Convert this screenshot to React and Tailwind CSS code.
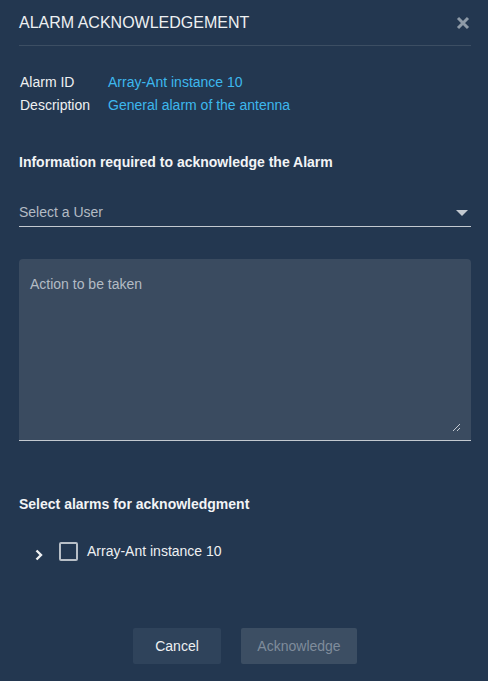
import React, { useState } from 'react';

export default function App() {
  const [checked, setChecked] = useState(false);

  return (
    <div className="min-h-[681px] w-[488px] bg-[#233750] text-[#e8ebee] font-['Liberation_Sans',Arial,sans-serif] pl-[19px] pr-[17px]">
      <div className="flex items-center justify-between h-[46px] border-b border-[#3c4e63] pt-px">
        <h1 className="text-[16px] text-[#eef0f2]">ALARM ACKNOWLEDGEMENT</h1>
        <button className="mr-px text-[#8e9aa7]" aria-label="Close">
          <svg width="14" height="14" viewBox="0 0 14 14">
            <path d="M2 2 L12 12 M12 2 L2 12" stroke="currentColor" strokeWidth="3" />
          </svg>
        </button>
      </div>

      <div className="mt-[25px] text-[14px] leading-[23px] pl-px">
        <div className="flex">
          <span className="w-[88px] text-[#eef0f2]">Alarm ID</span>
          <span className="text-[#3db7ee]">Array-Ant instance 10</span>
        </div>
        <div className="flex">
          <span className="w-[88px] text-[#eef0f2]">Description</span>
          <span className="text-[#3db7ee]">General alarm of the antenna</span>
        </div>
      </div>

      <h2 className="mt-[35px] text-[14px] font-bold text-[#f2f4f6]">
        Information required to acknowledge the Alarm
      </h2>

      <div className="mt-[24px] flex items-center justify-between h-[30px] border-b border-[#c3c9d0] pt-[2px]">
        <span className="text-[14px] text-[#b3bbc4]">Select a User</span>
        <svg width="12" height="6" viewBox="0 0 12 6" className="mr-[3px] text-[#c3c9d0]">
          <path d="M0 0 L12 0 L6 6 Z" fill="currentColor" />
        </svg>
      </div>

      <div className="relative mt-[32px] h-[182px] bg-[#3a4b60] rounded-t-[4px] border-b border-[#c3c9d0]">
        <div className="px-[11px] pt-[15px] text-[14px] text-[#b3bbc4]">Action to be taken</div>
        <svg width="9" height="9" viewBox="0 0 9 9" className="absolute right-[10px] bottom-[8px] text-[#c3c9d0]">
          <path d="M8 1 L1 8 M8 5 L5 8" stroke="currentColor" strokeWidth="1" />
        </svg>
      </div>

      <h2 className="mt-[53px] text-[14px] font-bold text-[#f2f4f6]">
        Select alarms for acknowledgment
      </h2>

      <div className="mt-[25px] flex items-center pl-[15px]">
        <svg width="10" height="14" viewBox="0 0 10 14" className="mt-[8px] text-[#eef0f2]">
          <path d="M2.5 2.5 L7 7 L2.5 11.5" stroke="currentColor" strokeWidth="2.4" fill="none" />
        </svg>
        <button
          onClick={() => setChecked(!checked)}
          className="ml-[15px] w-[19px] h-[19px] border-2 border-[#b8bfc7] rounded-[2px]"
          aria-label="Select alarm"
        />
        <span className="ml-[9px] text-[14px] text-[#eef0f2]">Array-Ant instance 10</span>
      </div>

      <div className="mt-[66px] flex justify-center gap-[20px]">
        <button className="w-[88px] h-[36px] rounded-[2px] bg-[#2f435b] text-[14px] text-[#eef0f2]">
          Cancel
        </button>
        <button disabled className="w-[116px] h-[36px] rounded-[2px] bg-[#3c4e63] text-[14px] text-[#7f8c9b]">
          Acknowledge
        </button>
      </div>
    </div>
  );
}
